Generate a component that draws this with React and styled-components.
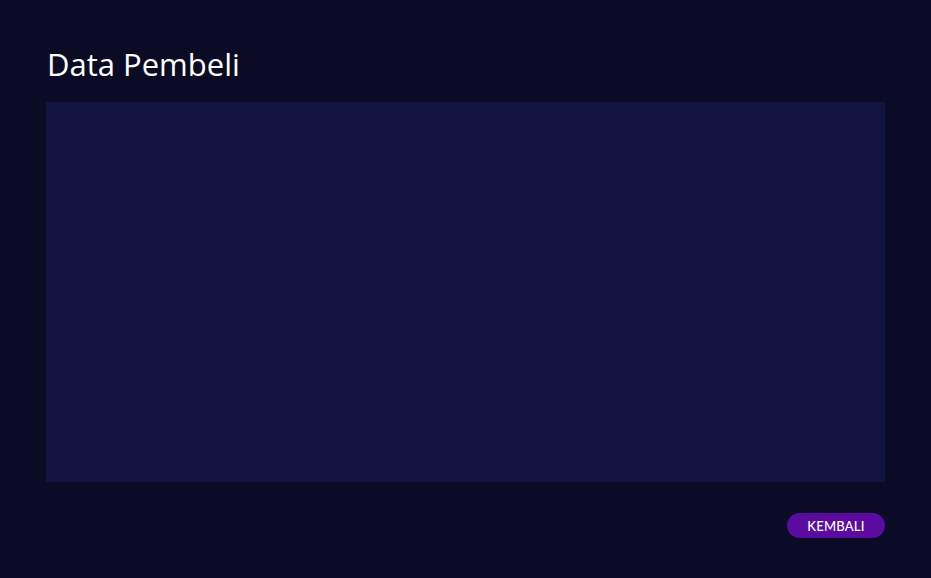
import styled, { createGlobalStyle } from 'styled-components';

const GlobalStyle = createGlobalStyle`
  html, body {
    margin: 0;
    padding: 0;
    background-color: #0b0b26;
  }
  body {
    font-family: 'Open Sans', 'Liberation Sans', sans-serif;
  }
`;

const Page = styled.main`
  min-height: 578px;
  box-sizing: border-box;
  padding: 44px 46px 0 46px;
  display: flex;
  flex-direction: column;
  background-color: #0b0b26;
`;

const Title = styled.h1`
  margin: 0 0 0 1px;
  font-family: 'Open Sans', 'Liberation Sans', sans-serif;
  font-size: 31px;
  font-weight: 400;
  letter-spacing: 0;
  line-height: 40px;
  color: #ffffff;
`;

const Panel = styled.section`
  margin-top: 18px;
  height: 380px;
  background-color: #12133f;
`;

const Footer = styled.div`
  display: flex;
  justify-content: flex-end;
  margin-top: 31px;
`;

const BackButton = styled.button`
  width: 98px;
  height: 25px;
  border: none;
  border-radius: 13px;
  background-color: #5b0ba0;
  color: #ffffff;
  font-family: 'Lato', 'Liberation Sans', sans-serif;
  font-size: 13px;
  font-weight: 500;
  letter-spacing: 0.2px;
  cursor: pointer;
  padding: 0;
`;

export default function App() {
  return (
    <>
      <GlobalStyle />
      <Page>
        <Title>Data Pembeli</Title>
        <Panel />
        <Footer>
          <BackButton>KEMBALI</BackButton>
        </Footer>
      </Page>
    </>
  );
}
